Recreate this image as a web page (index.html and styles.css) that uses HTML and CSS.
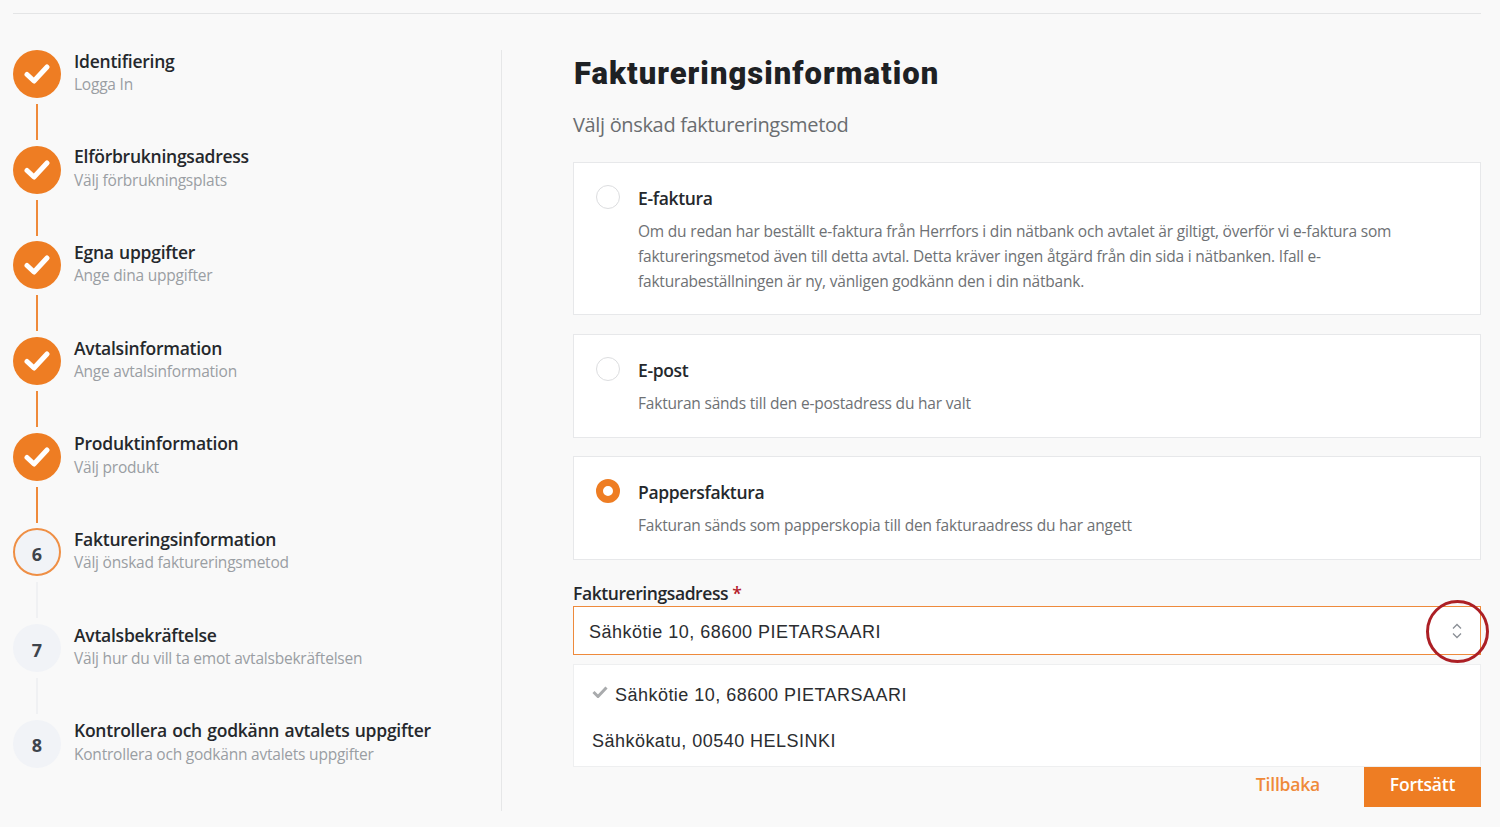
FILE: index.html
```html
<!DOCTYPE html>
<html lang="sv">
<head>
<meta charset="utf-8">
<title>Faktureringsinformation</title>
<link rel="stylesheet" href="styles.css">
</head>
<body>
<div class="page">
  <hr class="top-rule">
  <div class="layout">
    <nav class="steps">
      <div class="step done">
        <div class="marker"><span class="circle"><svg class="tick" viewBox="0 0 26 20"><path d="M3 10.5l7 6.5L23 3"/></svg></span><span class="line"></span></div>
        <div class="step-text"><div class="step-title">Identifiering</div><div class="step-sub">Logga In</div></div>
      </div>
      <div class="step done">
        <div class="marker"><span class="circle"><svg class="tick" viewBox="0 0 26 20"><path d="M3 10.5l7 6.5L23 3"/></svg></span><span class="line"></span></div>
        <div class="step-text"><div class="step-title">Elförbrukningsadress</div><div class="step-sub">Välj förbrukningsplats</div></div>
      </div>
      <div class="step done">
        <div class="marker"><span class="circle"><svg class="tick" viewBox="0 0 26 20"><path d="M3 10.5l7 6.5L23 3"/></svg></span><span class="line"></span></div>
        <div class="step-text"><div class="step-title">Egna uppgifter</div><div class="step-sub">Ange dina uppgifter</div></div>
      </div>
      <div class="step done">
        <div class="marker"><span class="circle"><svg class="tick" viewBox="0 0 26 20"><path d="M3 10.5l7 6.5L23 3"/></svg></span><span class="line"></span></div>
        <div class="step-text"><div class="step-title">Avtalsinformation</div><div class="step-sub">Ange avtalsinformation</div></div>
      </div>
      <div class="step done">
        <div class="marker"><span class="circle"><svg class="tick" viewBox="0 0 26 20"><path d="M3 10.5l7 6.5L23 3"/></svg></span><span class="line"></span></div>
        <div class="step-text"><div class="step-title">Produktinformation</div><div class="step-sub">Välj produkt</div></div>
      </div>
      <div class="step current">
        <div class="marker"><span class="circle">6</span><span class="line"></span></div>
        <div class="step-text"><div class="step-title">Faktureringsinformation</div><div class="step-sub">Välj önskad faktureringsmetod</div></div>
      </div>
      <div class="step">
        <div class="marker"><span class="circle">7</span><span class="line"></span></div>
        <div class="step-text"><div class="step-title">Avtalsbekräftelse</div><div class="step-sub">Välj hur du vill ta emot avtalsbekräftelsen</div></div>
      </div>
      <div class="step">
        <div class="marker"><span class="circle">8</span></div>
        <div class="step-text"><div class="step-title">Kontrollera och godkänn avtalets uppgifter</div><div class="step-sub">Kontrollera och godkänn avtalets uppgifter</div></div>
      </div>
    </nav>
    <main class="main">
      <h1 class="heading">Faktureringsinformation</h1>
      <p class="lead">Välj önskad faktureringsmetod</p>
      <div class="card card-tall">
        <span class="radio"></span>
        <div class="card-body">
          <div class="card-title">E-faktura</div>
          <p class="card-text">Om du redan har beställt e-faktura från Herrfors i din nätbank och avtalet är giltigt, överför vi e-faktura som<br>faktureringsmetod även till detta avtal. Detta kräver ingen åtgärd från din sida i nätbanken. Ifall e-<br>fakturabeställningen är ny, vänligen godkänn den i din nätbank.</p>
        </div>
      </div>
      <div class="card">
        <span class="radio"></span>
        <div class="card-body">
          <div class="card-title">E-post</div>
          <p class="card-text">Fakturan sänds till den e-postadress du har valt</p>
        </div>
      </div>
      <div class="card card-last">
        <span class="radio checked"></span>
        <div class="card-body">
          <div class="card-title">Pappersfaktura</div>
          <p class="card-text">Fakturan sänds som papperskopia till den fakturaadress du har angett</p>
        </div>
      </div>
      <div class="field-label">Faktureringsadress <span class="req">*</span></div>
      <div class="select">
        <span class="select-value">Sähkötie 10, 68600 PIETARSAARI</span>
        <svg class="updown" viewBox="0 0 10 16"><path d="M1 5.500l4-4 4 4M1 10.500l4 4 4-4"/></svg>
        <span class="highlight"></span>
      </div>
      <div class="options">
        <div class="option selected"><svg class="opt-check" viewBox="0 0 16 12"><path d="M1.500 6l4.500 4.500L14.500 1.500"/></svg>Sähkötie 10, 68600 PIETARSAARI</div>
        <div class="option">Sähkökatu, 00540 HELSINKI</div>
      </div>
      <div class="actions">
        <a class="back">Tillbaka</a>
        <button class="next">Fortsätt</button>
      </div>
    </main>
  </div>
</div>
</body>
</html>
```
FILE: styles.css
```css
* { box-sizing: border-box; }
html, body { margin: 0; height: 100%; }
body {
  background: #f9f9f9;
  color: #25282c;
  font-family: "Open Sans", "Noto Sans", sans-serif;
  overflow: hidden;
}
.page { padding: 13px 19px 0 13px; }
.top-rule { margin: 0; border: 0; height: 1px; background: #e4e5e6; }
.layout { display: flex; margin-top: 36px; }

.steps {
  width: 489px;
  height: 761px;
  border-right: 1px solid #e6e7e8;
  flex: none;
}
.step { display: flex; height: 95.7px; gap: 13px; }
.marker { display: flex; flex-direction: column; align-items: center; width: 48px; flex: none; }
.circle {
  width: 48px; height: 48px; flex: none;
  padding-top: 3px;
  border-radius: 50%;
  background: #f1f3f7;
  color: #3e444c;
  font-size: 18px; font-weight: 700;
  display: flex; align-items: center; justify-content: center;
}
.line { width: 2px; height: 36px; margin-top: 6px; background: #f0f1f3; }
.done .circle { background: #ee7d23; padding-top: 0; }
.done .line { background: #ef8a3a; }
.current .circle { border: 2px solid #ef8f45; }
.tick { width: 26px; height: 20px; fill: none; stroke: #fff; stroke-width: 5; stroke-linecap: round; stroke-linejoin: round; }
.step-text { margin-top: -1.500px; }
.step-title { font-size: 17.500px; font-weight: 600; line-height: 24.500px; color: #25282c; letter-spacing: -0.25px; word-spacing: 1px; }
.step-sub { font-size: 15.500px; line-height: 23px; color: #9a9ea3; letter-spacing: -0.22px; }

.main { margin-left: 71px; flex: 1; position: relative; }
.heading {
  margin: 2px 0 0 1px;
  font-family: Roboto, sans-serif;
  font-size: 31px; font-weight: 900; line-height: 44px;
  letter-spacing: 1.03px;
  color: #1e2124;
}
.lead { margin: 14px 0 0; font-size: 20px; line-height: 30px; color: #6a6d70; letter-spacing: -0.34px; }
.card {
  display: flex; gap: 18px;
  margin-top: 19px;
  height: 104px;
  padding: 23px 22px 0;
  background: #fff;
  border: 1px solid #e7e8ea;
}
.card-tall { height: 153px; margin-top: 22px; }
.card-last { margin-top: 18px; }
.radio { width: 24px; height: 24px; margin-top: -1px; flex: none; border-radius: 50%; border: 1px solid #dcdddf; background: #fff; }
.radio.checked { border: 7px solid #ee7d23; }
.card-title { font-size: 17.500px; font-weight: 600; line-height: 24px; letter-spacing: -0.35px; color: #25282c; }
.card-text { margin: 9px 0 0; font-size: 15.500px; line-height: 25px; color: #6e7174; letter-spacing: -0.2px; }

.field-label { margin-top: 21px; font-size: 17.500px; font-weight: 600; line-height: 24px; letter-spacing: -0.42px; color: #25282c; }
.req { color: #b5202c; }
.select {
  position: relative;
  height: 49px; margin-top: 1px;
  display: flex; align-items: center; justify-content: space-between;
  padding: 0 18px 0 15px;
  background: #fff;
  border: 1px solid #ee8a3c;
  font-family: "Liberation Sans", Arial, sans-serif;
  font-size: 18px; letter-spacing: 0.47px; color: #2b2d30;
}
.select-value { padding-top: 3px; }
.updown { width: 10px; height: 16px; fill: none; stroke: #8a8f96; stroke-width: 1.300; }
.highlight {
  position: absolute; left: 852px; top: -7px;
  width: 63px; height: 63px;
  border: 3px solid #ac1f25; border-radius: 50%;
}
.options {
  margin-top: 9px; height: 103px;
  padding: 7px 18px 0;
  background: #fff;
  border: 1px solid #eeeff0;
  font-family: "Liberation Sans", Arial, sans-serif;
  font-size: 18px; letter-spacing: 0.47px; color: #2b2d30;
}
.option { height: 46.500px; display: flex; align-items: center; }
.opt-check { width: 16px; height: 12px; margin-right: 7px; margin-top: -6px; fill: none; stroke: #a9abad; stroke-width: 3; }
.actions { display: flex; justify-content: flex-end; align-items: center; gap: 44px; }
.back { margin-bottom: 6px; font-size: 17.500px; font-weight: 600; color: #ef8a3a; letter-spacing: -0.2px; }
.next {
  width: 117px; height: 40px;
  margin: 0; padding: 0 0 7px; border: 0; border-radius: 0;
  background: #ee7d23; color: #fff;
  font-family: inherit; font-size: 17.500px; font-weight: 600; letter-spacing: -0.2px;
}
```
